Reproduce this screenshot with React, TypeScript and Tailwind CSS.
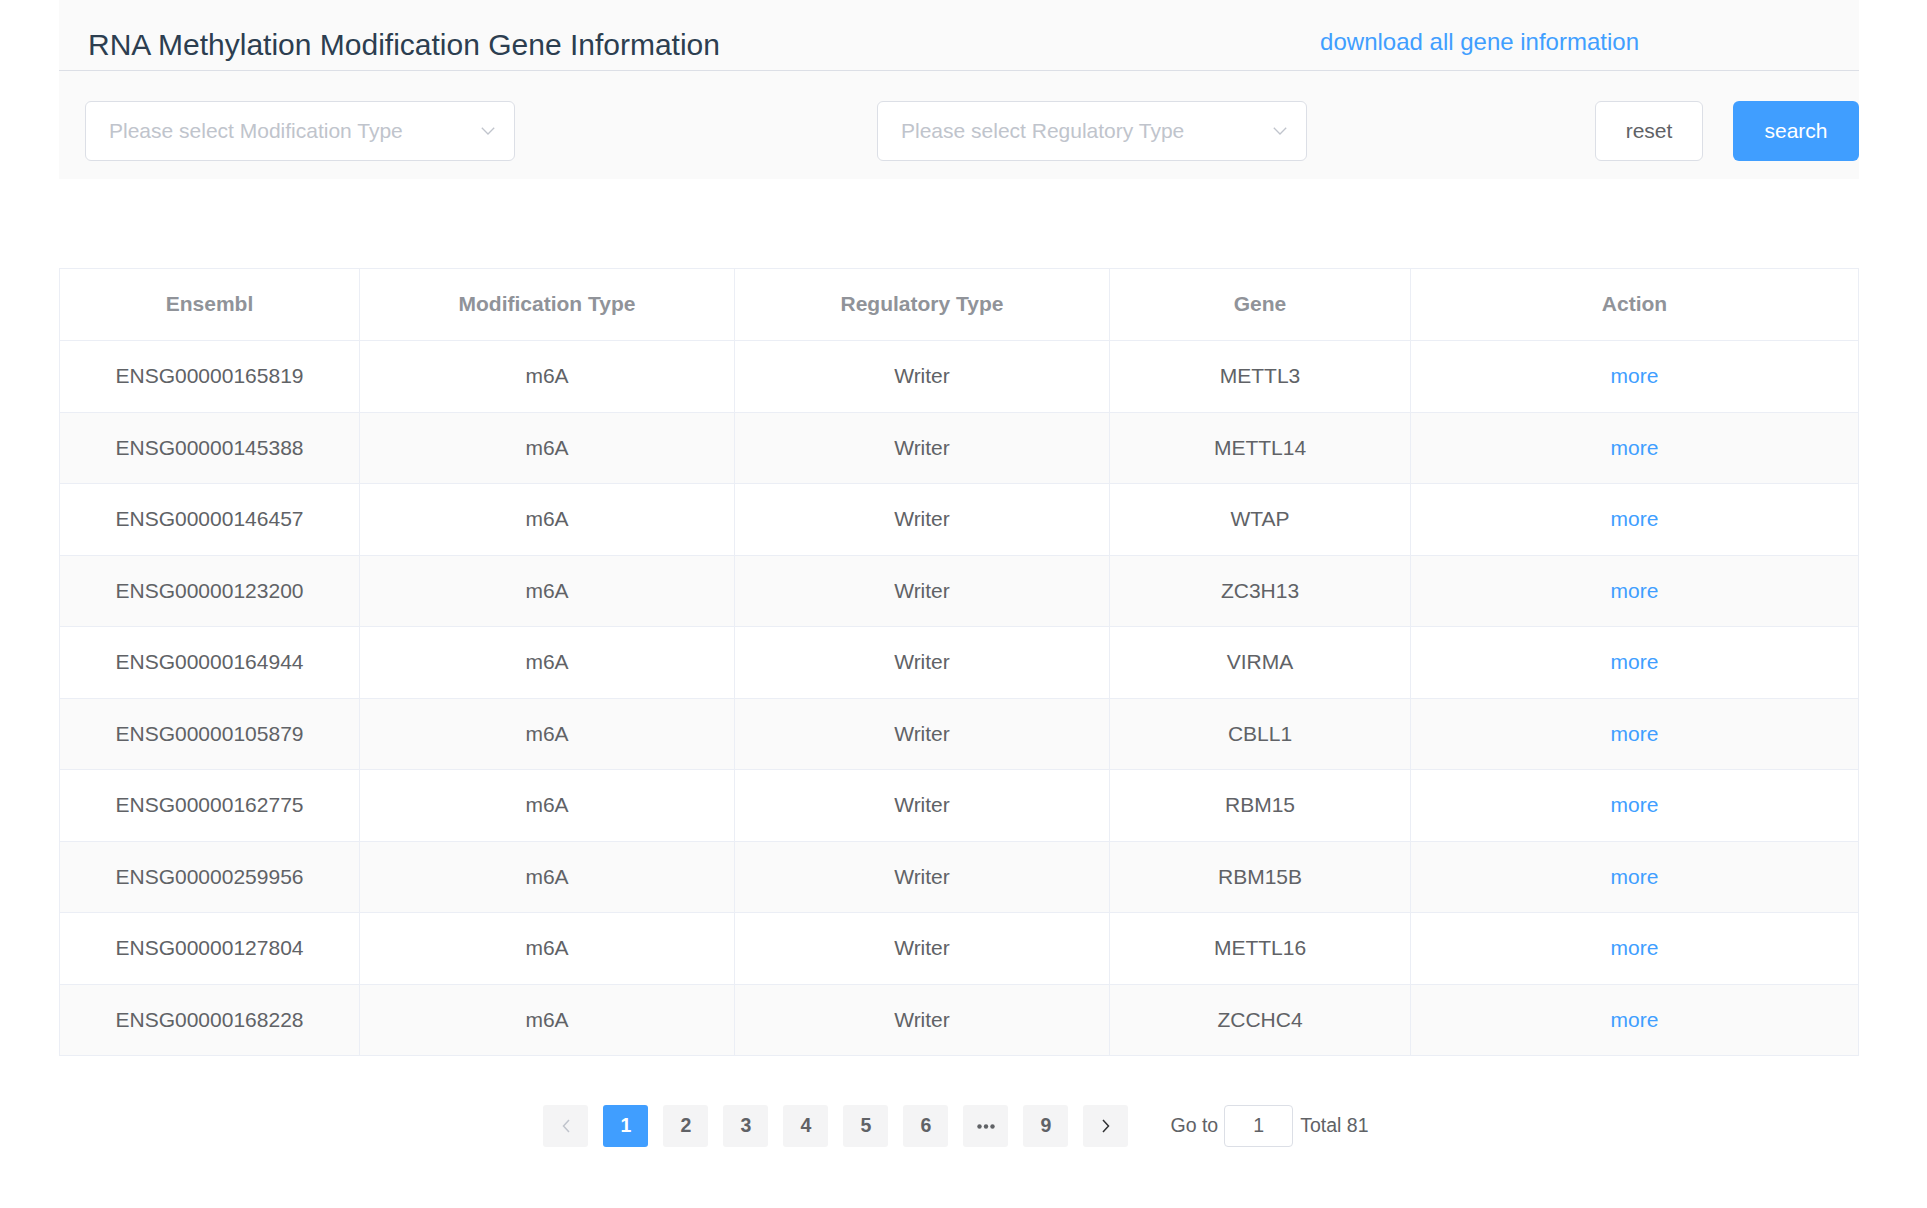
import React from "react";

const rows: [string, string][] = [
  ["ENSG00000165819", "METTL3"],
  ["ENSG00000145388", "METTL14"],
  ["ENSG00000146457", "WTAP"],
  ["ENSG00000123200", "ZC3H13"],
  ["ENSG00000164944", "VIRMA"],
  ["ENSG00000105879", "CBLL1"],
  ["ENSG00000162775", "RBM15"],
  ["ENSG00000259956", "RBM15B"],
  ["ENSG00000127804", "METTL16"],
  ["ENSG00000168228", "ZCCHC4"],
];

function ChevronDown() {
  return (
    <svg width="14" height="8" viewBox="0 0 14 8" fill="none">
      <polyline points="0.8,0.8 7,7 13.2,0.8" stroke="#c0c4cc" strokeWidth="1.3" />
    </svg>
  );
}

function Select({ label }: { label: string }) {
  return (
    <div className="flex h-[60px] w-[430px] items-center justify-between rounded-[6px] border border-[#dcdfe6] bg-white pl-[23px] pr-[19px]">
      <span className="text-[21px] leading-[24px] text-[#c0c4cc]">{label}</span>
      <ChevronDown />
    </div>
  );
}

function PagerBtn({ children, active }: { children: React.ReactNode; active?: boolean }) {
  return (
    <div
      className={
        active
          ? "flex h-[42px] w-[45px] items-center justify-center rounded-[3px] bg-[#409eff] text-[19.5px] font-bold text-white"
          : "flex h-[42px] w-[45px] items-center justify-center rounded-[3px] bg-[#f4f4f5] text-[19.5px] font-bold text-[#606266]"
      }
    >
      {children}
    </div>
  );
}

const gridCols = "grid grid-cols-[300px_375px_375px_301px_1fr]";

export default function App() {
  return (
    <div className="min-h-screen bg-white font-['Liberation_Sans',Arial,sans-serif]">
      <div className="ml-[59px] w-[1800px]">
        {/* header block */}
        <div className="bg-[#fafafa]">
          <div className="flex h-[71px] items-start border-b border-[#dcdfe6]">
            <h1 className="pl-[29px] pt-[28px] text-[30px] font-normal leading-[34px] text-[#2c3e50]">
              RNA Methylation Modification Gene Information
            </h1>
            <a className="ml-auto mr-[220px] pt-[28px] text-[24px] leading-[28px] text-[#409eff]">
              download all gene information
            </a>
          </div>
          <div className="flex items-center pb-[18px] pl-[26px] pt-[30px]">
            <Select label="Please select Modification Type" />
            <div className="ml-[362px]">
              <Select label="Please select Regulatory Type" />
            </div>
            <button className="ml-auto h-[60px] w-[108px] rounded-[6px] border border-[#dcdfe6] bg-white text-[21px] text-[#606266]">
              reset
            </button>
            <button className="ml-[30px] h-[60px] w-[126px] rounded-[6px] bg-[#409eff] text-[21px] text-white">
              search
            </button>
          </div>
        </div>

        {/* table */}
        <div className="mt-[89px] border border-b-0 border-[#ebeef5]">
          <div className={gridCols + " h-[72px] border-b border-[#ebeef5] bg-white text-[21px] font-bold text-[#909399]"}>
            {["Ensembl", "Modification Type", "Regulatory Type", "Gene", "Action"].map((h, i) => (
              <div
                key={h}
                className={
                  i < 4
                    ? "flex items-center justify-center border-r border-[#ebeef5] pb-[1px]"
                    : "flex items-center justify-center pb-[1px]"
                }
              >
                {h}
              </div>
            ))}
          </div>
          {rows.map(([id, gene], r) => (
            <div
              key={id}
              className={
                gridCols +
                " h-[71.5px] border-b border-[#ebeef5] text-[21px] text-[#606266] " +
                (r % 2 === 1 ? "bg-[#fafafa]" : "bg-white")
              }
            >
              <div className="flex items-center justify-center border-r border-[#ebeef5] pb-[1px]">{id}</div>
              <div className="flex items-center justify-center border-r border-[#ebeef5] pb-[1px]">m6A</div>
              <div className="flex items-center justify-center border-r border-[#ebeef5] pb-[1px]">Writer</div>
              <div className="flex items-center justify-center border-r border-[#ebeef5] pb-[1px]">{gene}</div>
              <div className="flex items-center justify-center pb-[1px]">
                <a className="text-[#409eff]">more</a>
              </div>
            </div>
          ))}
        </div>

        {/* pagination */}
        <div className="mt-[49px] flex items-center justify-center pr-[6px]">
          <div className="flex items-center gap-[15px]">
            <PagerBtn>
              <svg width="8" height="14" viewBox="0 0 8 14" fill="none">
                <polyline points="7,1 1.5,7 7,13" stroke="#c0c4cc" strokeWidth="1.5" />
              </svg>
            </PagerBtn>
            <PagerBtn active>1</PagerBtn>
            <PagerBtn>2</PagerBtn>
            <PagerBtn>3</PagerBtn>
            <PagerBtn>4</PagerBtn>
            <PagerBtn>5</PagerBtn>
            <PagerBtn>6</PagerBtn>
            <PagerBtn>
              <svg width="18" height="5" viewBox="0 0 18 5" fill="#606266">
                <circle cx="2.5" cy="2.5" r="2.2" />
                <circle cx="9" cy="2.5" r="2.2" />
                <circle cx="15.5" cy="2.5" r="2.2" />
              </svg>
            </PagerBtn>
            <PagerBtn>9</PagerBtn>
            <PagerBtn>
              <svg width="8" height="14" viewBox="0 0 8 14" fill="none">
                <polyline points="1,1 6.5,7 1,13" stroke="#303133" strokeWidth="1.5" />
              </svg>
            </PagerBtn>
          </div>
          <div className="ml-[42px] flex items-center text-[19.5px] text-[#606266]">
            <span>Go to</span>
            <div className="ml-[6px] flex h-[42px] w-[69px] items-center justify-center rounded-[4px] border border-[#dcdfe6] bg-white">
              1
            </div>
            <span className="ml-[7px]">Total 81</span>
          </div>
        </div>
      </div>
    </div>
  );
}
